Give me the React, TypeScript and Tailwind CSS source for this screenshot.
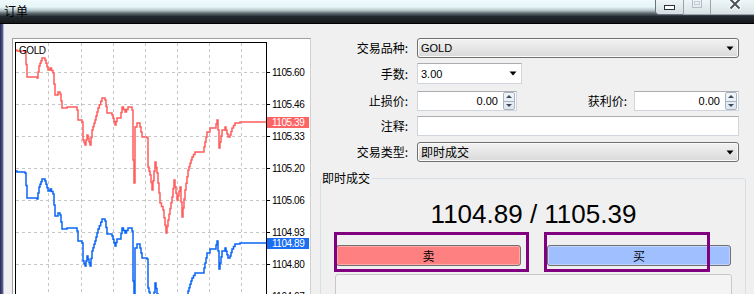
import React from "react";

const CJK = "font-['Noto_Sans_CJK_SC','Noto_Sans',sans-serif]";
const LAT = "font-['Liberation_Sans',Arial,sans-serif]";

const RED: [number, number][] = [
  [16, 50], [17, 51], [25, 52], [27, 77], [37, 78], [39, 66], [42, 58], [45, 60], [48, 70], [50, 68],
  [53, 73], [55, 95], [58, 92], [60, 94], [62, 108], [67, 107], [72, 107], [77, 110], [78, 120], [82, 122],
  [83, 140], [85, 145], [87, 135], [90, 145], [92, 130], [95, 120], [98, 108], [102, 98], [105, 100],
  [107, 113], [112, 115], [115, 125], [117, 118], [120, 118], [122, 107], [125, 112], [128, 107],
  [132, 110], [133, 160], [134, 183], [135, 127], [137, 123], [140, 127], [142, 137], [147, 138],
  [148, 167], [150, 175], [152, 190], [155, 162], [157, 173], [160, 203], [163, 210], [166, 233],
  [168, 220], [172, 197], [174, 180], [177, 200], [180, 187], [182, 217], [185, 190], [188, 170],
  [191, 160], [192, 157], [195, 152], [203, 152], [207, 132], [210, 128], [215, 128], [217, 120],
  [218, 130], [219, 148], [222, 130], [225, 127], [228, 137], [230, 135], [232, 128], [235, 123],
  [240, 122], [266, 122],
];

// staircase path (like pixelated MT4 line)
const stepPath = (dy: number) => {
  let d = `M${RED[0][0]} ${RED[0][1] + dy}`;
  for (let i = 1; i < RED.length; i++) {
    const [x0, y0] = RED[i - 1];
    const [x1, y1] = RED[i];
    const dx = x1 - x0;
    const dyy = y1 - y0;
    const steps = Math.max(1, Math.min(Math.abs(dx), Math.round(Math.abs(dyy) / 3)));
    for (let s = 1; s <= steps; s++) {
      const xs = x0 + (dx * s) / steps;
      const ys = y0 + (dyy * s) / steps;
      d += ` H${xs.toFixed(1)} V${(ys + dy).toFixed(1)}`;
    }
  }
  return d;
};

const GRID_Y = [72, 104, 136, 168, 200, 232, 264, 296];
const LABELS = ["1105.60", "1105.46", "1105.33", "1105.20", "1105.06", "1104.93", "1104.80", "1104.67"];
const GRID_X = [48, 81, 113, 145, 177, 209, 241];

function Chart() {
  const tf = { fontFamily: "'Liberation Sans', Arial, sans-serif", fontSize: 10, letterSpacing: -0.45 } as React.CSSProperties;
  return (
    <div className="w-[299px] h-[270px] shrink-0 border border-[#a0a0a0] border-r-[#d0d0d0] bg-white overflow-hidden">
      <svg width={297} height={268} viewBox="13 39 297 268" className="block">
        <defs>
          <clipPath id="plotclip">
            <rect x={16} y={43} width={250} height={270} />
          </clipPath>
        </defs>
        {GRID_Y.map((y) => (
          <line key={"h" + y} x1={16} x2={266} y1={y + 0.5} y2={y + 0.5} stroke="#c6c6c6" strokeDasharray="3 3" />
        ))}
        {GRID_X.map((x) => (
          <line key={"v" + x} x1={x + 0.5} x2={x + 0.5} y1={43} y2={310} stroke="#c6c6c6" strokeDasharray="3 3" />
        ))}
        <g clipPath="url(#plotclip)">
          <path d={stepPath(0)} fill="none" stroke="#ff5e5e" strokeWidth={1.5} />
          <path d={stepPath(121)} fill="none" stroke="#0a66f6" strokeWidth={1.5} />
        </g>
        <rect x={15.5} y={42.5} width={251} height={300} fill="none" stroke="#000" />
        {GRID_Y.map((y, i) => (
          <g key={"l" + y}>
            <line x1={266} x2={270} y1={y + 0.5} y2={y + 0.5} stroke="#000" />
            <text x={272} y={y + 4} style={tf} fill="#000">
              {LABELS[i]}
            </text>
          </g>
        ))}
        <rect x={267} y={117} width={42} height={11} fill="#ff6464" />
        <text x={272} y={126} style={tf} fill="#fff">1105.39</text>
        <rect x={267} y={238} width={42} height={11} fill="#1a6ef2" />
        <text x={272} y={247} style={tf} fill="#fff">1104.89</text>
        <text x={19} y={53.5} style={tf} fill="#000">GOLD</text>
      </svg>
    </div>
  );
}

function Arrow() {
  return (
    <svg width={8} height={5} viewBox="0 0 8 5" className="block shrink-0">
      <path d="M0.5 0.5 L7.5 0.5 L4 4.5 Z" fill="#000" />
    </svg>
  );
}

function Label({ children }: { children: React.ReactNode }) {
  return (
    <div className={`${CJK} w-[88px] mr-[9px] shrink-0 text-right text-[12px] leading-[20px] text-black`}>{children}</div>
  );
}

function Combo({ children, cjk }: { children: React.ReactNode; cjk?: boolean }) {
  return (
    <div className="w-[322px] h-[20px] rounded-[3px] border border-[#707070] bg-[linear-gradient(to_bottom,#f3f3f3,#e6e6e6_50%,#d9d9d9)] shadow-[inset_0_0_0_1px_#fbfbfb] flex items-center pl-[3px] pr-[4px]">
      <div className={`flex-1 ${cjk ? CJK + " text-[12px]" : LAT + " text-[11px]"} leading-[18px] text-black`}>{children}</div>
      <Arrow />
    </div>
  );
}

function Spin({ w }: { w: string }) {
  return (
    <div className={`${w} h-[20px] flex bg-white border border-[#d0d5dc] border-t-[#abadb3]`}>
      <div className={`${LAT} flex-1 text-right pr-[5px] text-[11px] leading-[18px] text-black`}>0.00</div>
      <div className="w-[12px] mr-px flex flex-col border border-[#a9b4c2] rounded-[2px] bg-[linear-gradient(to_bottom,#f2f6fa,#dfe6ee)]">
        <div className="flex-1 flex items-center justify-center border-b border-[#a9b4c2]">
          <svg width={6} height={3} viewBox="0 0 6 3" className="block">
            <path d="M0 3 L3 0 L6 3 Z" fill="#3b4b60" />
          </svg>
        </div>
        <div className="flex-1 flex items-center justify-center">
          <svg width={6} height={3} viewBox="0 0 6 3" className="block">
            <path d="M0 0 L6 0 L3 3 Z" fill="#3b4b60" />
          </svg>
        </div>
      </div>
    </div>
  );
}

function Form() {
  return (
    <div className="ml-[9px] w-[426px] shrink-0 flex flex-col">
      <div className="flex items-center h-[20px]">
        <Label>交易品种:</Label>
        <Combo>GOLD</Combo>
      </div>
      <div className="flex items-center h-[21px] mt-[5px]">
        <Label>手数:</Label>
        <div className="w-[105px] h-[21px] bg-white border border-[#d0d5dc] border-t-[#abadb3] flex items-center pl-[3px] pr-[4px]">
          <div className={`${LAT} flex-1 text-[11px] leading-[18px] text-black`}>3.00</div>
          <Arrow />
        </div>
      </div>
      <div className="flex items-center h-[20px] mt-[7px]">
        <Label>止损价:</Label>
        <Spin w="w-[100px]" />
        <div className={`${CJK} w-[110px] mr-[7px] text-right text-[12px] leading-[20px] text-black`}>获利价:</div>
        <Spin w="w-[105px]" />
      </div>
      <div className="flex items-center h-[20px] mt-[5px]">
        <Label>注释:</Label>
        <div className="w-[322px] h-[20px] bg-white border border-[#d0d5dc] border-t-[#abadb3]" />
      </div>
      <div className="flex items-center h-[20px] mt-[6px]">
        <Label>交易类型:</Label>
        <Combo cjk>即时成交</Combo>
      </div>
      <div className="relative mt-[16px] w-[426px] h-[130px] border border-[#d5dfe5] rounded-[3px] pl-[15px] pr-[14px]">
        <span className={`${CJK} absolute -top-[10px] left-px bg-[#f0f0f0] pr-[2px] text-[12px] leading-[18px] text-black`}>即时成交</span>
        <div className={`${LAT} mt-[20px] h-[30px] text-center text-[26px] leading-[30px] text-black`}>1104.89 / 1105.39</div>
        <div className="mt-[16px] flex gap-[26px]">
          <div className="w-[185px] h-[21px] rounded-[3px] border border-[#707070] bg-[#ff8080] shadow-[inset_0_0_0_1px_#ffa8a8] flex items-center justify-center">
            <span className={`${CJK} text-[12px] leading-[16px] text-black`}>卖</span>
          </div>
          <div className="w-[184px] h-[21px] rounded-[3px] border border-[#707070] bg-[#a0bfff] shadow-[inset_0_0_0_1px_#c0d4ff] flex items-center justify-center">
            <span className={`${CJK} text-[12px] leading-[16px] text-black`}>买</span>
          </div>
        </div>
        <div className="mt-[8px] -ml-px w-[397px] h-[26px] rounded-[3px] border border-[#c8c8c8] bg-[#f4f4f4]" />
      </div>
    </div>
  );
}

function TitleBar() {
  return (
    <div className="h-[24px] shrink-0 flex items-start border-b border-black bg-[linear-gradient(to_bottom,#eefafc_0%,#e6f5f7_30%,#b9c7cb_45%,#5d6970_58%,#22282e_72%,#14181c_100%)]">
      <div className={`${CJK} pl-[4px] pt-[3px] text-[12px] leading-[16px] text-black`}>订单</div>
      <div className="ml-auto flex h-[15px]">
        <div className="w-[28px] h-[15px] overflow-hidden border-l border-b border-[#6b7380] rounded-bl-[4px] bg-[linear-gradient(to_bottom,#eef6f8,#d3dde2)] flex justify-center">
          <div className="mt-[5px] w-[11px] h-[5px] border border-[#2a2f38] bg-white" />
        </div>
        <div className="w-[27px] h-[15px] overflow-hidden border-l border-b border-[#9aa2ac] bg-[linear-gradient(to_bottom,#eef6f8,#d8e1e5)] flex justify-center">
          <div className="-mt-[2px] w-[10px] h-[10px] border border-[#b4bcc4] flex items-center justify-center">
            <div className="w-[6px] h-[4px] border border-[#c4ccd4]" />
          </div>
        </div>
        <div className="w-[44px] h-[15px] overflow-hidden border-l border-b border-[#9aa2ac] bg-[linear-gradient(to_bottom,#eef6f8,#d8e1e5)] flex justify-center">
          <svg width={14} height={14} viewBox="0 0 14 14" className="block -mt-[3px] ml-[4px]">
            <path d="M2 2 L12 12 M12 2 L2 12" stroke="#ffffff" strokeWidth={4} />
            <path d="M2.5 2.5 L11.5 11.5 M11.5 2.5 L2.5 11.5" stroke="#4a525c" strokeWidth={2} />
          </svg>
        </div>
      </div>
    </div>
  );
}

export default function App() {
  return (
    <div className="relative w-[754px] h-[294px] overflow-hidden bg-[#f0f0f0] flex flex-col">
      <TitleBar />
      <div className="flex flex-1 min-h-0">
        <div className="w-[3px] shrink-0 bg-[linear-gradient(to_right,#23284a,#5a62b0)]" />
        <div className="w-px shrink-0 bg-[#b8b8b8]" />
        <div className="flex flex-1 pl-[8px] pt-[14px]">
          <Chart />
          <Form />
        </div>
      </div>
      <div className="absolute left-[334px] top-[232px] w-[195px] h-[40px] border-[3px] border-[#800080]" />
      <div className="absolute left-[544px] top-[232px] w-[166px] h-[40px] border-[3px] border-[#800080]" />
    </div>
  );
}
